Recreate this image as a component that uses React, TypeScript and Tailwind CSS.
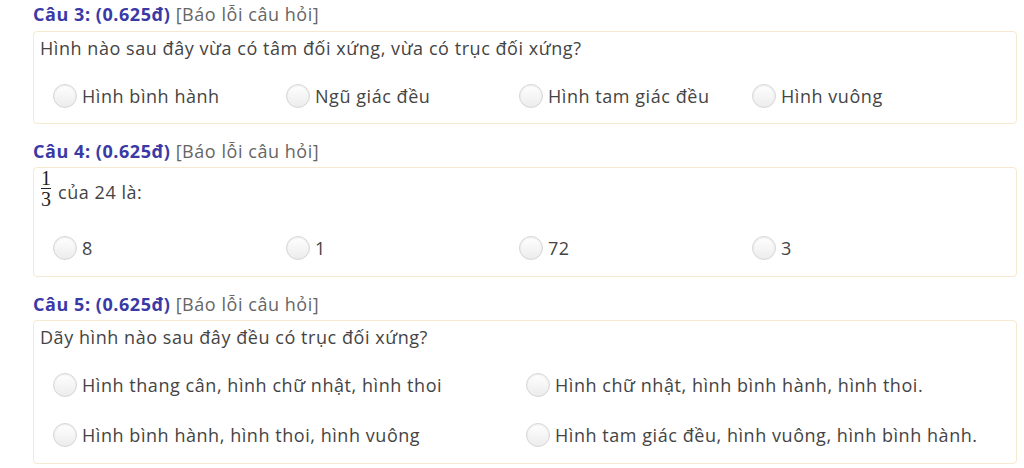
import React from 'react';

const font = { fontFamily: '"Open Sans", "Noto Sans", sans-serif' };

const Radio: React.FC<{ label: string }> = ({ label }) => (
  <label className="flex items-center h-[24px]">
    <span className="w-[24px] h-[24px] rounded-full border border-[#d6d6d6] bg-gradient-to-b from-white to-[#ececec] shadow-[inset_0_1px_2px_rgba(0,0,0,0.08)] shrink-0" />
    <span className="ml-[5px] text-[18px] tracking-[0.55px] text-[#444] whitespace-nowrap">{label}</span>
  </label>
);

const Header: React.FC<{ n: number; className?: string }> = ({ n, className }) => (
  <div className={`h-[20px] leading-[20px] text-[18px] tracking-[0.55px] mb-[6px] ${className || ''}`}>
    <span className="font-bold text-[#3a3aa6]">Câu {n}: (0.625đ)</span>{' '}
    <span className="text-[#666]">[Báo lỗi câu hỏi]</span>
  </div>
);

const Box: React.FC<{ children: React.ReactNode; className?: string }> = ({ children, className }) => (
  <div className={`border border-[#f6e9cf] rounded-[4px] px-[6px] ${className || ''}`}>{children}</div>
);

export default function App() {
  return (
    <div className="w-[1024px] h-[468px] bg-white pl-[33px] pr-[7px] pt-[4px] overflow-hidden" style={font}>
      <Header n={3} className="mb-[7px]" />
      <Box className="pt-[3px] pb-[15px]">
        <div className="h-[26px] leading-[26px] text-[18px] tracking-[0.55px] text-[#444]">
          Hình nào sau đây vừa có tâm đối xứng, vừa có trục đối xứng?
        </div>
        <div className="flex mt-[23px] ml-[13px]">
          {['Hình bình hành', 'Ngũ giác đều', 'Hình tam giác đều', 'Hình vuông'].map((o) => (
            <div key={o} className="w-[233px]">
              <Radio label={o} />
            </div>
          ))}
        </div>
      </Box>

      <Header n={4} className="mt-[17px]" />
      <Box className="pt-[1px] pb-[16px]">
        <div className="flex items-center h-[38px] text-[18px] tracking-[0.55px] text-[#444]">
          <span
            className="inline-flex flex-col items-center text-[20px] leading-[18px] text-[#222] ml-[1px] mr-[7px] tracking-normal"
            style={{ fontFamily: '"Liberation Serif", "DejaVu Serif", serif' }}
          >
            <span>1</span>
            <span className="w-[10px] border-t border-[#222] my-[1px]" />
            <span>3</span>
          </span>
          <span className="mt-[8px]">của 24 là:</span>
        </div>
        <div className="flex mt-[29px] ml-[13px]">
          {['8', '1', '72', '3'].map((o) => (
            <div key={o} className="w-[233px]">
              <Radio label={o} />
            </div>
          ))}
        </div>
      </Box>

      <Header n={5} className="mt-[17px]" />
      <Box className="pt-[3px] pb-[16px]">
        <div className="h-[26px] leading-[26px] text-[18px] tracking-[0.55px] text-[#444]">
          Dãy hình nào sau đây đều có trục đối xứng?
        </div>
        <div className="grid grid-cols-[473px_473px] gap-y-[26px] mt-[23px] ml-[13px]">
          <Radio label="Hình thang cân, hình chữ nhật, hình thoi" />
          <Radio label="Hình chữ nhật, hình bình hành, hình thoi." />
          <Radio label="Hình bình hành, hình thoi, hình vuông" />
          <Radio label="Hình tam giác đều, hình vuông, hình bình hành." />
        </div>
      </Box>
    </div>
  );
}
